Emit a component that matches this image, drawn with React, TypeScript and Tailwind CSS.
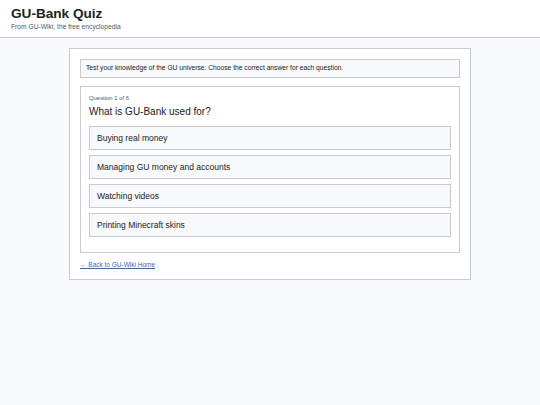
import React from "react";

const options = [
  "Buying real money",
  "Managing GU money and accounts",
  "Watching videos",
  "Printing Minecraft skins",
];

export default function App() {
  return (
    <div
      className="min-h-[405px] bg-[#f8f9fa] text-[#202122]"
      style={{ fontFamily: '"Liberation Sans", Arial, sans-serif' }}
    >
      <header className="h-[38px] bg-white border-b border-[#c8ccd1] px-[11px] pt-[6px]">
        <h1 className="text-[13.6px] leading-[16px] font-bold">GU-Bank Quiz</h1>
        <p className="text-[6.7px] leading-[9px] text-[#54595d]">
          From GU-Wiki, the free encyclopedia
        </p>
      </header>

      <main className="ml-[69px] mt-[10px] w-[402px] bg-white border border-[#c8ccd1] p-[10px]">
        <div className="h-[19px] flex items-center bg-[#f8f9fa] border border-[#c8ccd1] px-[5px] text-[6.7px]">
          Test your knowledge of the GU universe. Choose the correct answer for each question.
        </div>

        <div className="mt-[8px] border border-[#c8ccd1] bg-white px-[8px] pt-[7px] pb-[15px]">
          <div className="text-[5.9px] leading-[8px] text-[#54595d]">Question 1 of 6</div>
          <h2 className="mt-[3px] text-[10px] leading-[14px]">What is GU-Bank used for?</h2>
          <div className="mt-[7px] flex flex-col gap-[5px]">
            {options.map((opt) => (
              <button
                key={opt}
                className="h-[24px] w-full text-left bg-[#f8f9fa] border border-[#c8ccd1] px-[7px] text-[8.5px]"
              >
                {opt}
              </button>
            ))}
          </div>
        </div>

        <a
          href="#"
          className="block mt-[7px] text-[6.5px] leading-[9px] text-[#3366cc] underline"
        >
          ← Back to GU-Wiki Home
        </a>
      </main>
    </div>
  );
}
